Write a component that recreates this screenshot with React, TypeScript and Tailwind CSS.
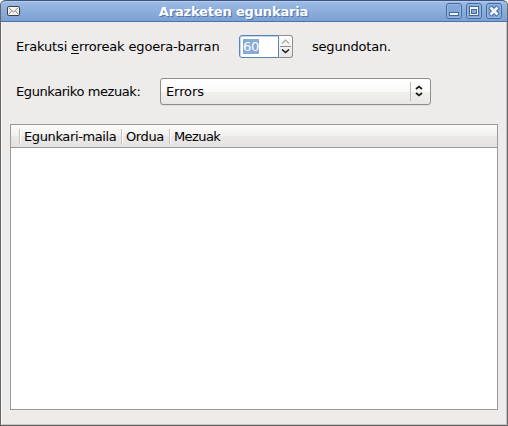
import React from 'react';

function Envelope() {
  return (
    <svg width="13" height="10" viewBox="0 0 13 10" className="block">
      <rect x="0.5" y="0.5" width="12" height="9" rx="1" fill="#f4f4f1" stroke="#3d4045" />
      <path d="M1.5 1.5 L6.5 6 L11.5 1.5 M1.5 8.5 L4.5 5 M11.5 8.5 L8.5 5" fill="none" stroke="#858783" />
    </svg>
  );
}

function TitleButton({ label, children }: { label: string; children: React.ReactNode }) {
  return (
    <button aria-label={label} className="h-4 w-4">
      <svg width="16" height="16" viewBox="0 0 16 16" className="block">
        <rect x="0.5" y="0.5" width="15" height="15" rx="2.5" fill="#82a7d9" stroke="#44699c" />
        <rect x="1.5" y="1.5" width="13" height="13" rx="1.5" fill="none" stroke="#96b6e2" />
        {children}
      </svg>
    </button>
  );
}

function TitleBar() {
  return (
    <header className="flex h-[22px] items-start rounded-t-[5px] border-t border-b border-t-[#3f557d] border-b-[#4a74ad] bg-linear-to-b from-[#9dbbe6] to-[#7ba0d2] pt-[2px] pr-[5px] pl-[6px] shadow-[inset_0_1px_0_#b4cbed]">
      <div className="mt-[3px] w-[14px]">
        <Envelope />
      </div>
      <h1 className="mt-px flex-1 text-center text-[13px] leading-4 font-bold tracking-[-0.16px] whitespace-nowrap text-white [text-shadow:1px_1px_0_#4f78b0]">
        Arazketen egunkaria
      </h1>
      <div className="flex gap-1">
        <TitleButton label="Minimize">
          <rect x="3.5" y="9.5" width="9" height="3" fill="#f3f6fb" stroke="#44699c" />
        </TitleButton>
        <TitleButton label="Maximize">
          <rect x="3.5" y="3.5" width="9" height="9" fill="#f3f6fb" stroke="#44699c" />
          <rect x="5.5" y="6.5" width="5" height="4" fill="#82a7d9" stroke="#44699c" />
        </TitleButton>
        <TitleButton label="Close">
          <path d="M4 4 L12 12 M12 4 L4 12" stroke="#44699c" strokeWidth="4.6" />
          <path d="M4.5 4.5 L11.5 11.5 M11.5 4.5 L4.5 11.5" stroke="#f3f6fb" strokeWidth="2.8" />
        </TitleButton>
      </div>
    </header>
  );
}

function SpinBox() {
  return (
    <div className="ml-[19px] flex h-[23px] w-[54px]">
      <div className="flex w-[40px] items-center rounded-l-[3px] border border-[#5b82b5] bg-white pl-[3px] shadow-[inset_1px_1px_0_#c5d6ec]">
        <span className="h-[15px] w-4 bg-[#86abd9] text-[13px] leading-4 tracking-[-0.3px] text-white">60</span>
      </div>
      <div className="flex w-[14px] flex-col rounded-r-[3px] border border-l-0 border-[#8f8d8a] bg-linear-to-b from-white to-[#e8e7e5]">
        <svg width="13" height="21" viewBox="0 0 13 21">
          <path d="M3 7.5 L6.5 4 L10 7.5" fill="none" stroke="#aaa8a5" strokeWidth="1.2" />
          <path d="M1 10.5 H12" stroke="#8f8d8a" />
          <path d="M3 13.5 L6.5 16.5 L10 13.5" fill="none" stroke="#1a1a1a" strokeWidth="1.6" />
        </svg>
      </div>
    </div>
  );
}

function Separator() {
  return <i className="block h-[15px] w-[2px] shrink-0 border-r border-l border-r-white border-l-[#c2c0be]" />;
}

export default function App() {
  return (
    <div className="h-[426px] w-[508px] overflow-hidden bg-white font-['DejaVu_Sans',sans-serif] text-[13px] leading-4 text-black">
      <div className="flex h-full flex-col rounded-t-[5px] border-r border-b border-l border-[#656565] bg-[#edeceb]">
        <TitleBar />
        <main className="flex flex-1 flex-col border-r border-b border-l border-r-[#c8c6c4] border-b-[#c8c6c4] border-l-[#f8f8f7] pr-2 pl-2">
          <div className="mt-[13px] flex h-[23px] items-center pl-[6px]">
            <label className="w-[204px] tracking-[-0.16px] whitespace-nowrap">
              Erakutsi <u className="underline-offset-2">e</u>rroreak egoera-barran
            </label>
            <SpinBox />
            <span className="ml-[19px] tracking-[-0.2px]">segundotan.</span>
          </div>
          <div className="mt-5 flex h-[27px] items-center pl-[6px]">
            <label className="w-36 tracking-[-0.42px] whitespace-nowrap">Egunkariko mezuak:</label>
            <button className="flex h-[27px] w-[271px] items-center rounded-[3px] border border-[#8f8d8a] bg-[linear-gradient(#ffffff,#f9f9f8_50%,#f0efee_51%,#e9e8e6)] pl-[5px] shadow-[0_1px_0_#dfdedc]">
              <span className="flex-1 text-left tracking-[-0.1px]">Errors</span>
              <i className="h-[19px] w-px bg-[#bdbbb9]" />
              <svg width="19" height="19" viewBox="0 0 19 19">
                <path d="M5 7 L8 4.5 L11 7 M5 11 L8 13.5 L11 11" fill="none" stroke="#1a1a1a" strokeWidth="1.7" />
              </svg>
            </button>
          </div>
          <div className="mt-[19px] flex h-[286px] flex-col border border-[#9b9997] bg-white">
            <div className="flex h-[23px] shrink-0 items-center border-b border-[#9b9997] bg-[linear-gradient(#fcfcfb,#f1f0ef_50%,#e9e8e7_52%,#e4e3e1)] pl-2">
              <Separator />
              <span className="w-[100px] pt-[2px] pl-[3px] tracking-[-0.38px] whitespace-nowrap">Egunkari-maila</span>
              <Separator />
              <span className="w-[46px] pt-[2px] pl-[3px] tracking-[-0.4px]">Ordua</span>
              <Separator />
              <span className="pt-[2px] pl-[3px] tracking-[-0.6px]">Mezuak</span>
            </div>
          </div>
        </main>
      </div>
    </div>
  );
}
